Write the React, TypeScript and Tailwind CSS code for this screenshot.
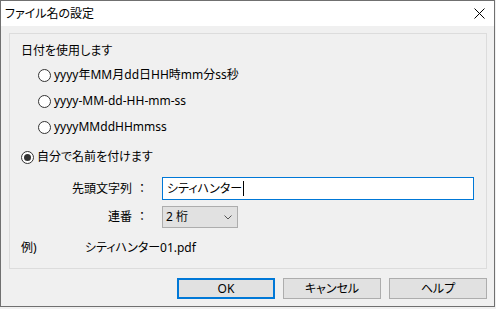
import React from "react";

function Radio({ checked }: { checked?: boolean }) {
  return (
    <span className="flex h-[13px] w-[13px] shrink-0 items-center justify-center rounded-full border border-[#333333] bg-white">
      {checked && <span className="h-[7px] w-[7px] rounded-full bg-[#333333]" />}
    </span>
  );
}

function Btn({ label, primary }: { label: string; primary?: boolean }) {
  return (
    <div
      className={
        "flex h-[21px] w-[98px] items-center justify-center bg-[#e1e1e1] text-[12px] text-black " +
        (primary ? "border-2 border-[#0078d7]" : "border border-[#adadad]")
      }
    >
      {label}
    </div>
  );
}

export default function App() {
  return (
    <div className="h-[309px] w-[496px] overflow-hidden bg-[#f0f0f0] font-['Noto_Sans','Noto_Sans_CJK_JP',sans-serif] [font-feature-settings:'palt']">
      <div className="flex h-[307px] w-[495px] flex-col border border-[#707070] bg-[#f0f0f0]">
        <div className="flex h-[25px] shrink-0 items-center justify-between bg-white pl-[4px] pr-[9px]">
          <span className="text-[12px] leading-none text-black">ファイル名の設定</span>
          <svg width="11" height="11" viewBox="0 0 11 11">
            <path d="M0.5 0.5 L10.5 10.5 M10.5 0.5 L0.5 10.5" stroke="#000" strokeWidth="1" />
          </svg>
        </div>
        <div className="pl-[8px] pt-[7px]">
          <div className="flex h-[236px] w-[478px] flex-col border border-[#dcdcdc] pl-[11px] pt-[7px] text-[12px] text-black">
            <div className="flex h-[20px] items-center">日付を使用します</div>
            <div className="mt-[4px] flex h-[20px] items-center gap-[3px] pl-[17px]">
              <Radio />
              <span>yyyy年MM月dd日HH時mm分ss秒</span>
            </div>
            <div className="mt-[6px] flex h-[20px] items-center gap-[3px] pl-[17px]">
              <Radio />
              <span>yyyy-MM-dd-HH-mm-ss</span>
            </div>
            <div className="mt-[6px] flex h-[20px] items-center gap-[3px] pl-[17px]">
              <Radio />
              <span>yyyyMMddHHmmss</span>
            </div>
            <div className="mt-[10px] flex h-[20px] items-center gap-[3px]">
              <Radio checked />
              <span>自分で名前を付けます</span>
            </div>
            <div className="mt-[10px] flex h-[23px] items-center">
              <div className="flex w-[129px] justify-end">
                <span>先頭文字列</span>
                <span className="ml-[4px] mr-[2px] w-[12px] text-center">：</span>
              </div>
              <div className="ml-[12px] flex h-[23px] w-[312px] items-center border border-[#0078d7] bg-white pl-[4px]">
                <span>シティハンター</span>
                <span className="ml-[1px] h-[15px] w-[1px] bg-black" />
              </div>
            </div>
            <div className="mt-[6px] flex h-[22px] items-center">
              <div className="flex w-[129px] justify-end">
                <span>連番</span>
                <span className="ml-[4px] mr-[2px] w-[12px] text-center">：</span>
              </div>
              <div className="ml-[12px] flex h-[22px] w-[76px] items-center justify-between border border-[#adadad] bg-[#e1e1e1] pl-[3px] pr-[5px]">
                <span>2 桁</span>
                <svg width="8" height="5" viewBox="0 0 8 5">
                  <path d="M0.5 0.5 L4 4 L7.5 0.5" stroke="#555" strokeWidth="1" fill="none" />
                </svg>
              </div>
            </div>
            <div className="mt-[10px] flex h-[20px] items-center">
              <span className="w-[64px]">例)</span>
              <span>シティハンター01.pdf</span>
            </div>
          </div>
          <div className="mt-[9px] flex w-[478px] justify-end gap-[8px]">
            <Btn label="OK" primary />
            <Btn label="キャンセル" />
            <Btn label="ヘルプ" />
          </div>
        </div>
      </div>
    </div>
  );
}
